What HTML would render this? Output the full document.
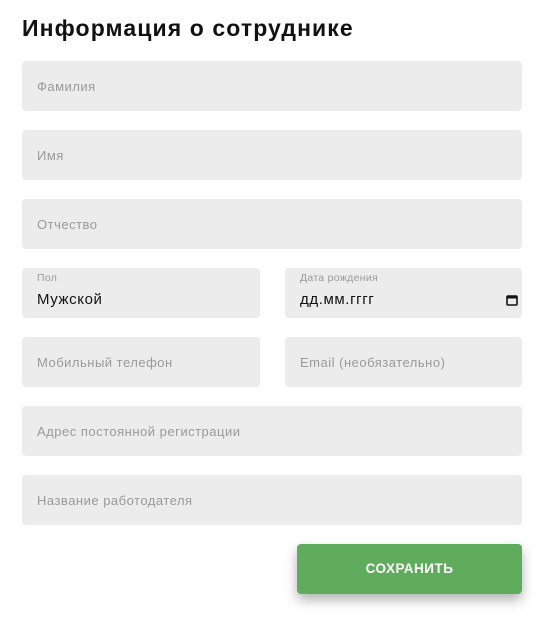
<!DOCTYPE html><html><head><meta charset="utf-8"><style>
body{margin:0;background:#fff;font-family:"Liberation Sans","DejaVu Sans",sans-serif;width:540px;height:617px;position:relative;overflow:hidden}
h1{position:absolute;left:22px;top:15px;margin:0;font-size:23px;font-weight:600;color:#111;letter-spacing:1.1px}
.f{position:absolute;height:50px;background:#ececec;border-radius:4px;box-sizing:border-box;padding-left:15px;font-size:13px;color:#9a9a9a;line-height:52px;letter-spacing:0.5px}
.s{position:absolute;left:15px;top:4px;font-size:10.5px;line-height:13px;color:#9a9a9a;letter-spacing:0.3px}
.v{position:absolute;left:15px;top:23px;font-size:15px;line-height:18px;color:#111;letter-spacing:0.6px}
.btn{position:absolute;left:297px;top:544px;width:225px;height:50px;background:#60ac5d;border-radius:4px;color:#fff;font-size:13.5px;font-weight:600;text-align:center;line-height:50px;box-shadow:0 6px 12px rgba(0,0,0,.3);letter-spacing:0.5px}
</style></head><body>
<h1>Информация о сотруднике</h1>
<div class="f" style="left:22px;top:61px;width:500px">Фамилия</div>
<div class="f" style="left:22px;top:130px;width:500px">Имя</div>
<div class="f" style="left:22px;top:199px;width:500px">Отчество</div>
<div class="f" style="left:22px;top:268px;width:238px"><span class="s">Пол</span><span class="v">Мужской</span></div>
<div class="f" style="left:285px;top:268px;width:237px"><span class="s">Дата рождения</span><span class="v">дд.мм.гггг</span>
<svg style="position:absolute;right:4px;top:26px" width="12" height="12" viewBox="0 0 12 12"><rect x="1" y="2" width="10" height="9" rx="1" fill="none" stroke="#111" stroke-width="1.6"/><rect x="1" y="2" width="10" height="2.5" fill="#111"/></svg></div>
<div class="f" style="left:22px;top:337px;width:238px">Мобильный телефон</div>
<div class="f" style="left:285px;top:337px;width:237px">Email (необязательно)</div>
<div class="f" style="left:22px;top:406px;width:500px">Адрес постоянной регистрации</div>
<div class="f" style="left:22px;top:475px;width:500px">Название работодателя</div>
<div class="btn">СОХРАНИТЬ</div>
</body></html>
